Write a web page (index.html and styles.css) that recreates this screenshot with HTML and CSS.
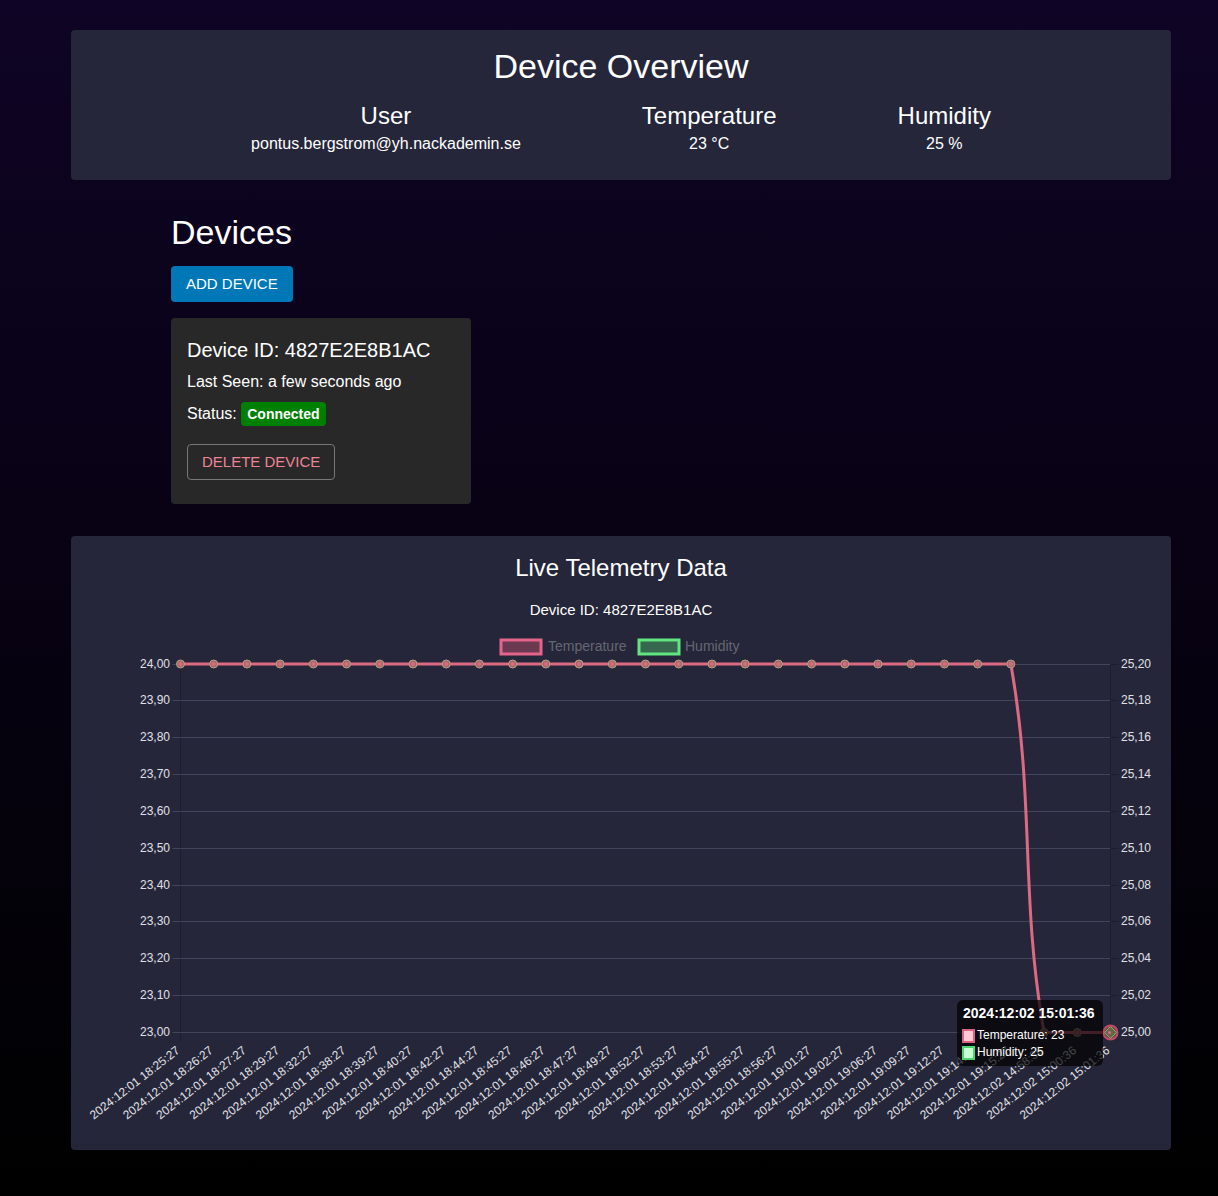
FILE: index.html
```html
<!DOCTYPE html>
<html lang="en">
<head>
<meta charset="utf-8">
<meta name="viewport" content="width=device-width, initial-scale=1">
<title>Device Overview</title>
<link rel="stylesheet" href="styles.css">
</head>
<body>
<main class="page">
  <section class="panel">
    <h1 class="title">Device Overview</h1>
    <div class="stats">
      <div class="stat"><h2 class="subtitle">User</h2><p class="text">pontus.bergstrom@yh.nackademin.se</p></div>
      <div class="stat"><h2 class="subtitle">Temperature</h2><p class="text">23 °C</p></div>
      <div class="stat"><h2 class="subtitle">Humidity</h2><p class="text">25 %</p></div>
    </div>
  </section>

  <section class="devices">
    <h1 class="title">Devices</h1>
    <button class="button button-add" type="button">ADD DEVICE</button>
    <article class="device">
      <h2 class="device-id">Device ID: 4827E2E8B1AC</h2>
      <p class="text">Last Seen: a few seconds ago</p>
      <p class="text">Status: <span class="badge">Connected</span></p>
      <button class="button button-delete" type="button">DELETE DEVICE</button>
    </article>
  </section>

  <section class="panel">
    <h2 class="subtitle">Live Telemetry Data</h2>
    <p class="chart-device">Device ID: 4827E2E8B1AC</p>
    <svg class="chart" id="chart" viewBox="0 0 1068 504" role="img" aria-label="Temperature and humidity over time"></svg>
  </section>
</main>
<script src="chart.js"></script>
</body>
</html>
```
FILE: styles.css
```css
* {
  box-sizing: border-box;
}

body {
  margin: 0;
  min-height: 100vh;
  background: linear-gradient(#0f0425, #090216 40%, #020105 85%, #000);
  color: #fff;
  font-family: "Liberation Sans", Arial, sans-serif;
  font-size: 16px;
  line-height: 24px;
}

h1, h2, p {
  margin: 0;
  font-weight: 400;
}

.page {
  display: flex;
  flex-direction: column;
  gap: 32px;
  width: 100%;
  max-width: 1124px;
  margin: 0 auto;
  padding: 30px 0 46px 24px;
}

.panel {
  padding: 16px 16px 24px;
  border-radius: 4px;
  background: #252639;
  text-align: center;
}

.panel:last-child {
  padding-bottom: 16px;
}

.title {
  font-size: 34px;
  line-height: 40px;
}

.subtitle {
  font-size: 24px;
  line-height: 32px;
}

.stats {
  display: flex;
  flex-wrap: wrap;
  justify-content: center;
  gap: 0 121px;
  margin-top: 14px;
}

.devices {
  display: flex;
  flex-direction: column;
  align-items: flex-start;
  padding: 0 100px;
}

.button {
  height: 36px;
  border: 0;
  border-radius: 4px;
  font: inherit;
  font-size: 15px;
  line-height: 24px;
  cursor: pointer;
}

.button-add {
  margin-top: 14px;
  padding: 0 15px;
  background: #0078b8;
  color: #fff;
}

.button-delete {
  margin-top: 10px;
  padding: 0 14px;
  border: 1px solid #777;
  background: transparent;
  color: #ef8496;
}

.device {
  display: flex;
  flex-direction: column;
  align-items: flex-start;
  gap: 8px;
  width: 300px;
  max-width: 100%;
  margin-top: 16px;
  padding: 20px 16px 24px;
  border-radius: 4px;
  background: #282828;
}

.device-id {
  font-size: 20px;
  line-height: 24px;
}

.badge {
  display: inline-block;
  padding: 0 6px;
  border-radius: 4px;
  background: #008000;
  font-size: 14px;
  font-weight: 700;
}

.chart-device {
  margin-top: 14px;
  font-size: 15px;
}

.chart {
  display: block;
  width: 100%;
  height: auto;
  margin-top: 8px;
  overflow: visible;
  font-size: 12px;
}

.grid-line { stroke: #42445c; }
.axis-line { stroke: #1d1d30; }
.tick { fill: #e0e0e8; }
.tick-left { text-anchor: end; }
.legend-text { fill: #666673; font-size: 14px; }
.swatch-temperature { fill: #6b3950; stroke: #e3668a; stroke-width: 3; }
.swatch-humidity { fill: #37674f; stroke: #61e57f; stroke-width: 3; }
.series { fill: none; stroke: #dc6a82; stroke-width: 3; }
.point { fill: #a06b68; stroke: #bb9d86; }
.point-inner { fill: #dc6a82; }
.hover-ring { fill: #71483f; stroke: #c14a67; stroke-width: 2; }
.hover-diamond { fill: #69654b; stroke: #7fae70; }
.tooltip { fill: #000; fill-opacity: .7; }
.tooltip-text { fill: #fff; }
.tooltip-title { font-size: 14px; font-weight: 700; }
.key-temperature { fill: #ffc8d5; stroke: #d8647f; stroke-width: 2; }
.key-humidity { fill: #c8ffd3; stroke: #4fd56d; stroke-width: 2; }
```
FILE: chart.js
```js
const first = "2024:12:01 ";
const second = "2024:12:02 ";
const labels = [
  ...["18:25", "18:26", "18:27", "18:29", "18:32", "18:38", "18:39", "18:40", "18:42",
    "18:44", "18:45", "18:46", "18:47", "18:49", "18:52", "18:53", "18:54", "18:55",
    "18:56", "19:01", "19:02", "19:06", "19:09", "19:12", "19:14", "19:15"
  ].map(time => first + time + ":27"),
  ...["14:58:36", "15:00:36", "15:01:36"].map(time => second + time)
];
const plot = { left: 93.5, right: 1023.5, top: 34, bottom: 402.5 };
const stepX = (plot.right - plot.left) / (labels.length - 1);
const stepY = (plot.bottom - plot.top) / 10;
const x = i => plot.left + i * stepX;
const out = [];

function add(tag, attrs, text = "") {
  const list = Object.entries(attrs).map(([key, value]) => `${key}="${value}"`).join(" ");
  out.push(`<${tag} ${list}>${text}</${tag}>`);
}

function line(cls, x1, y1, x2, y2) {
  add("line", { class: cls, x1, y1, x2, y2 });
}

// Legend
add("rect", { class: "swatch-temperature", x: 414, y: 10, width: 40, height: 14 });
add("text", { class: "legend-text", x: 461, y: 21 }, "Temperature");
add("rect", { class: "swatch-humidity", x: 552, y: 10, width: 40, height: 14 });
add("text", { class: "legend-text", x: 598, y: 21 }, "Humidity");

// Axes and grid
line("axis-line", plot.left, plot.top, plot.left, plot.bottom + 8);
line("axis-line", plot.right, plot.top, plot.right, plot.bottom + 8);
for (let i = 0; i <= 10; i++) {
  const y = Math.floor(plot.top + i * stepY);
  const comma = value => value.toFixed(2).replace(".", ",");
  line("grid-line", plot.left - 8, y + 0.5, plot.right, y + 0.5);
  line("axis-line", plot.right, y + 0.5, plot.right + 8, y + 0.5);
  add("text", { class: "tick tick-left", x: 83, y: y + 4 }, comma(24 - i / 10));
  add("text", { class: "tick", x: 1034, y: y + 4 }, comma(25.2 - i / 50));
}
labels.forEach((label, i) => {
  add("text", { class: "tick tick-left", transform: `translate(${x(i)} 422) rotate(-38)` }, label);
});

// Temperature series
const a = x(25), b = x(26);
add("path", {
  class: "series",
  d: `M${plot.left} ${plot.top}H${a}C${a + 24} ${plot.top + 135} ${b - 24} ${plot.bottom - 135} ${b} ${plot.bottom}H${plot.right}`
});
for (let i = 0; i < labels.length - 1; i++) {
  const y = i < 26 ? plot.top : plot.bottom;
  add("circle", { class: "point", cx: x(i), cy: y, r: 4 });
  add("circle", { class: "point-inner", cx: x(i), cy: y, r: 2 });
}

// Tooltip and marker for the last reading
add("circle", { class: "hover-ring", cx: plot.right, cy: plot.bottom, r: 7 });
add("rect", { class: "tooltip", x: 870, y: 370, width: 146, height: 66, rx: 6 });
add("text", { class: "tooltip-text tooltip-title", x: 876, y: 388 }, labels[28]);
add("rect", { class: "key-temperature", x: 876, y: 400, width: 11, height: 12 });
add("text", { class: "tooltip-text", x: 890, y: 409 }, "Temperature: 23");
add("rect", { class: "key-humidity", x: 876, y: 417, width: 11, height: 12 });
add("text", { class: "tooltip-text", x: 890, y: 426 }, "Humidity: 25");
add("path", { class: "hover-diamond", d: `M${plot.right} ${plot.bottom - 6}l6 6l-6 6l-6 -6Z` });
add("circle", { class: "point-inner", cx: plot.right - 1, cy: plot.bottom, r: 1.5 });

document.getElementById("chart").innerHTML = out.join("");
```
